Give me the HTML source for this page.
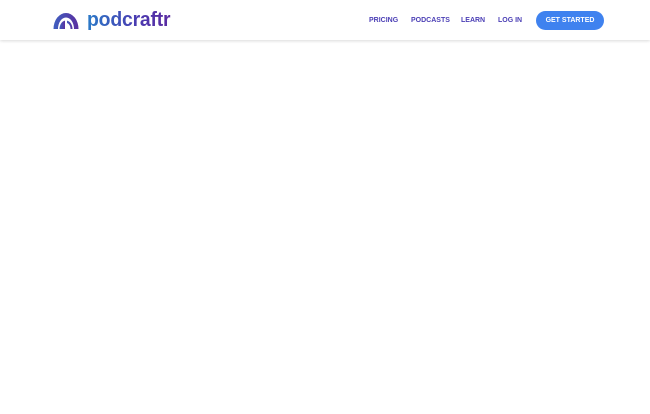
<!DOCTYPE html>
<html><head><style>
body{margin:0;width:650px;height:414px;background:#fff;font-family:"Liberation Sans",sans-serif;overflow:hidden}
.hd{position:absolute;left:0;top:0;width:650px;height:40px;background:#fff;box-shadow:0 1px 3px rgba(0,0,0,.15)}
.logo{position:absolute;left:87px;top:9px;font-size:20px;font-weight:bold;letter-spacing:-0.2px;background:linear-gradient(90deg,#2a7ac8,#4a3ab0 60%,#5a2aa0);-webkit-background-clip:text;color:transparent;transform:scaleX(0.97);transform-origin:left}
.nav{position:absolute;top:17px;font-size:7px;font-weight:bold;color:#4b3fb5}
.btn{position:absolute;left:536px;top:11px;width:68px;height:19px;border-radius:10px;background:#3f82ef;color:#fff;font-size:7px;font-weight:bold;text-align:center;line-height:19px}
</style></head><body>
<div class="hd">
<svg style="position:absolute;left:53px;top:11px" width="26" height="19" viewBox="0 0 26 19">
<defs><linearGradient id="g" x1="0" x2="1"><stop offset="0" stop-color="#3f5fc0"/><stop offset="1" stop-color="#5a2fa0"/></linearGradient></defs>
<path d="M0.5 18 A12.5 16 0 0 1 25.5 18 L21 18 A8 11.5 0 0 0 5 18 Z" fill="url(#g)"/>
<path d="M6.5 18 A6.5 8.5 0 0 1 12 9.6 L12 18 Z" fill="url(#g)"/>
<path d="M14 9.6 A6.5 8.5 0 0 1 19.5 18 L17.5 18 A4.5 6 0 0 0 14 12 Z" fill="url(#g)"/>
</svg>
<div class="logo">podcraftr</div>
<div class="nav" style="left:369px">PRICING</div>
<div class="nav" style="left:411px">PODCASTS</div>
<div class="nav" style="left:461px">LEARN</div>
<div class="nav" style="left:498px">LOG IN</div>
<div class="btn">GET STARTED</div>
</div>
</body></html>
